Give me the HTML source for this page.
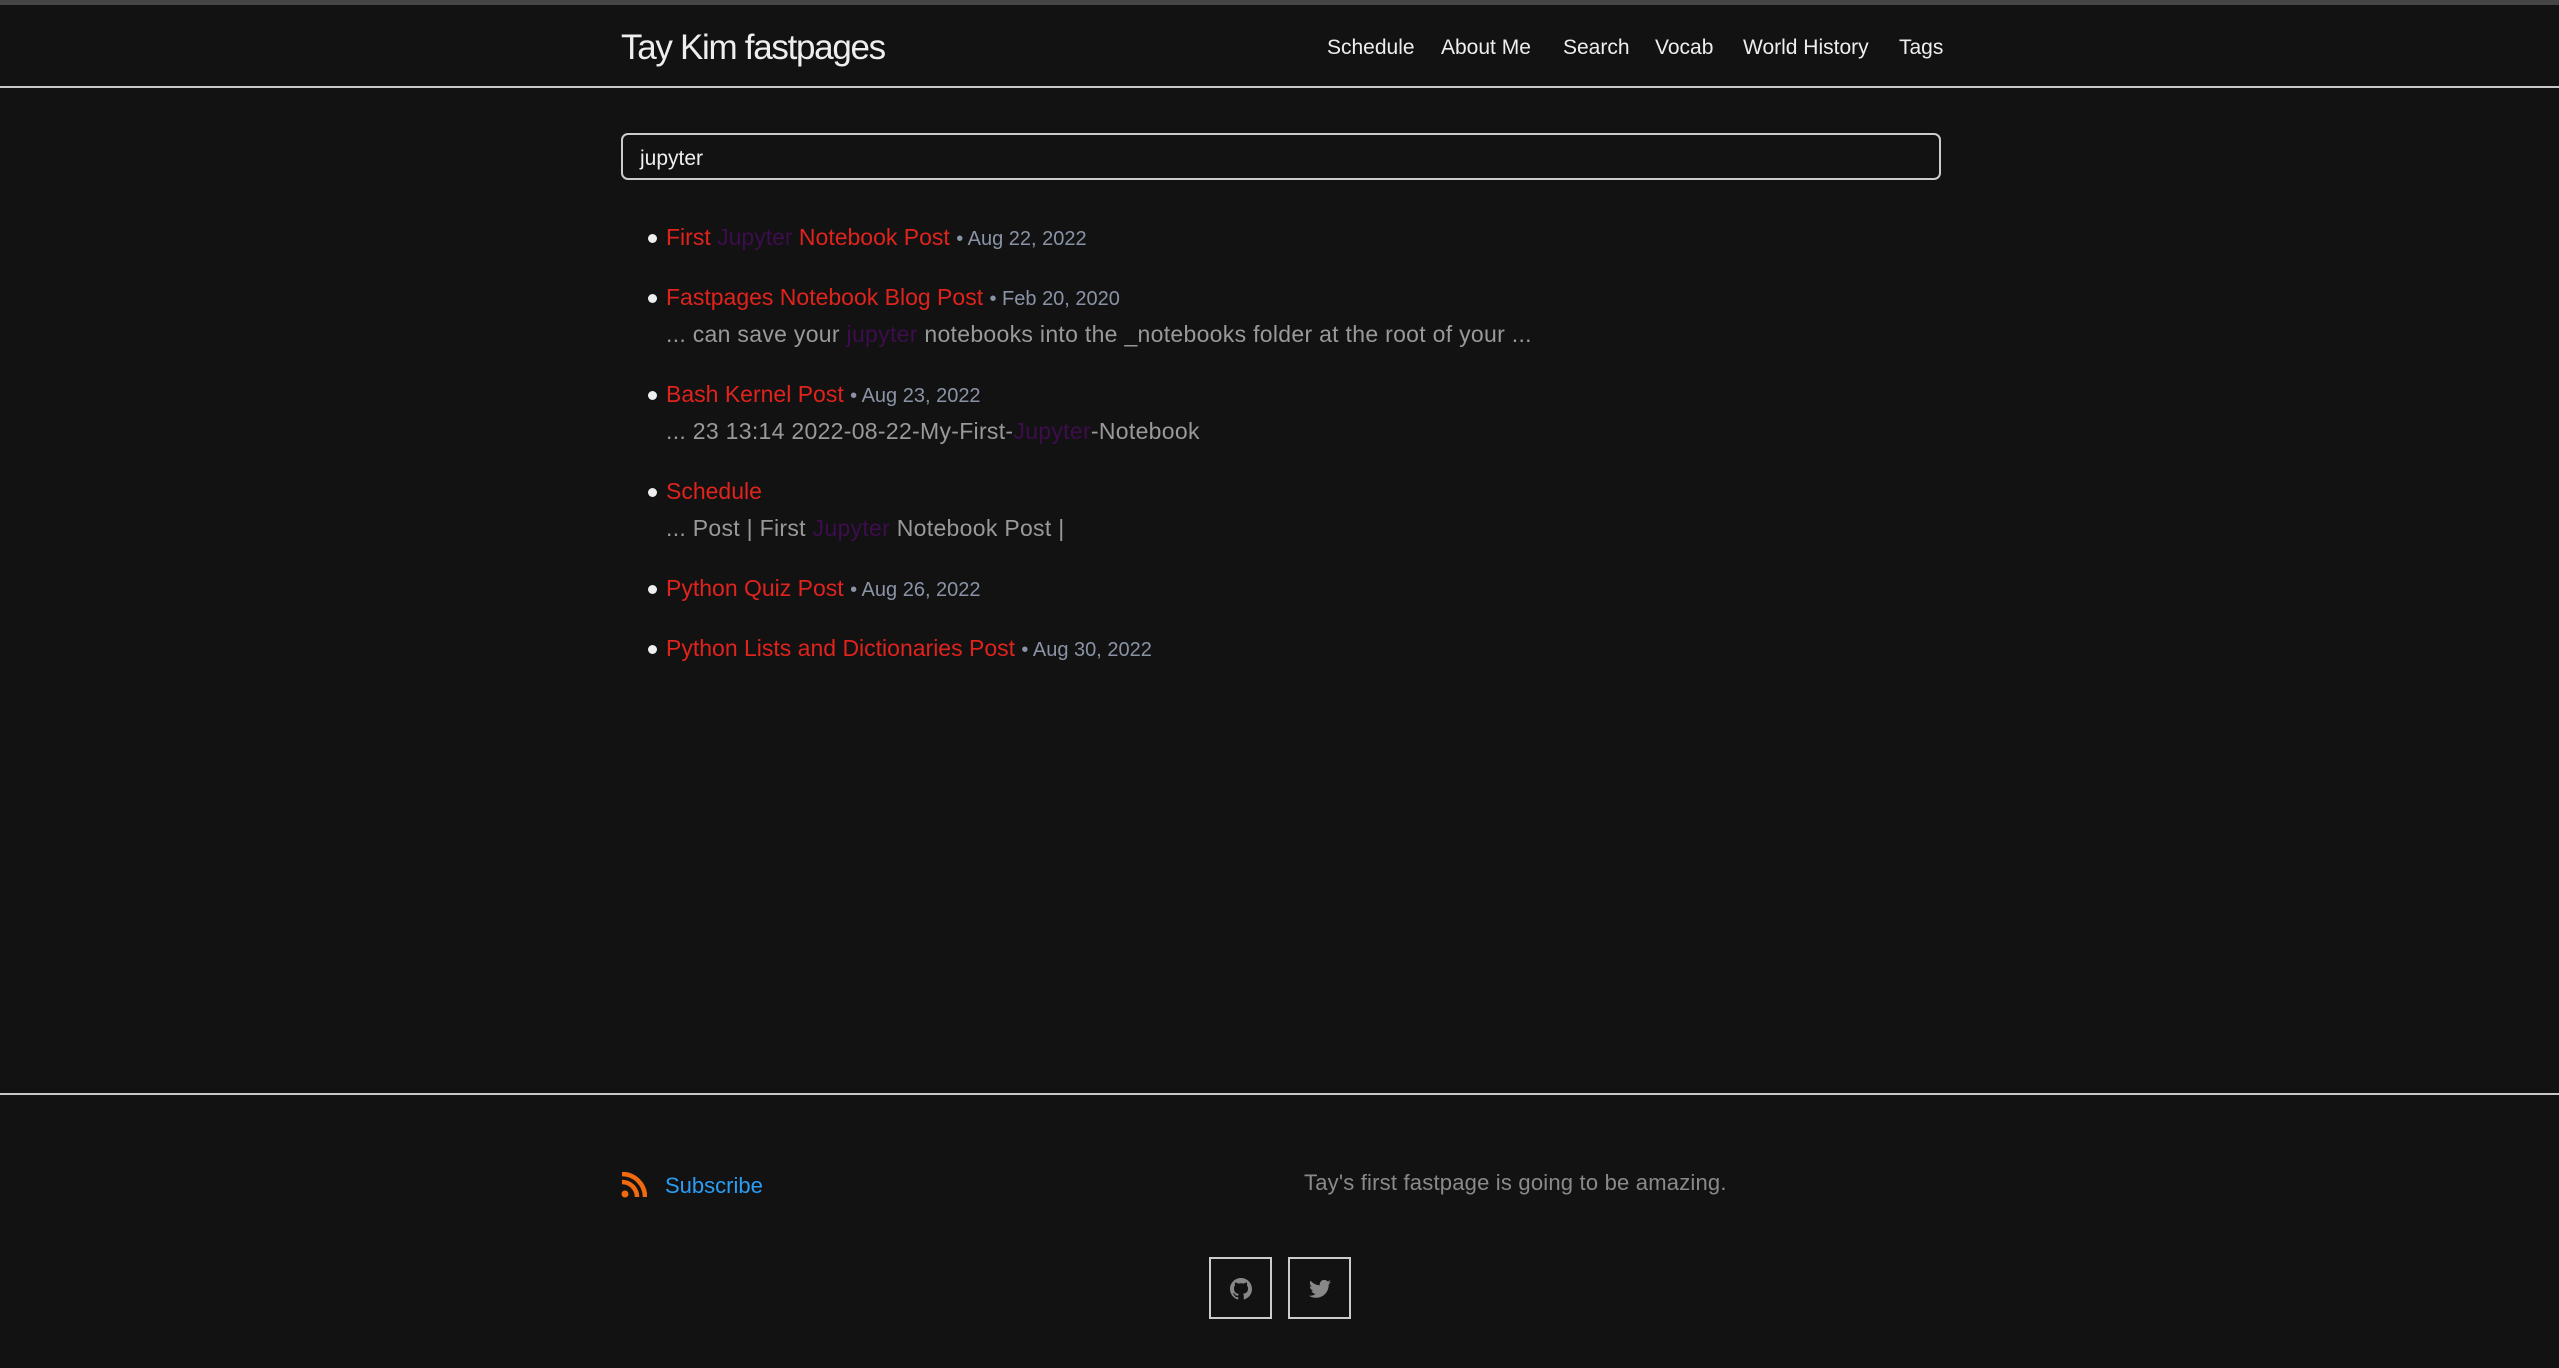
<!DOCTYPE html>
<html><head><meta charset="utf-8"><style>
*{margin:0;padding:0;box-sizing:border-box}
body{width:2559px;height:1368px;background:#121212;font-family:"Liberation Sans",sans-serif;position:relative;overflow:hidden;color:#ddd}
.topbar{position:absolute;left:0;top:0;width:2559px;height:5px;background:#454545}
.hline{position:absolute;left:0;width:2559px;height:2px;background:#c8c8c8}
.title{position:absolute;left:621px;top:28px;font-size:35px;color:#eee;font-weight:300;letter-spacing:-1.3px}
.nav{position:absolute;top:36px;font-size:21px;color:#eee}
.search{position:absolute;left:621px;top:133px;width:1320px;height:47px;border:2px solid #ccc;border-radius:7px;font-size:21px;color:#eee;padding:12px 17px}
.item{position:absolute;left:666px;font-size:23px;color:#e0231c;white-space:nowrap}
.item:before{content:"";position:absolute;left:-18px;top:10px;width:9px;height:9px;border-radius:50%;background:#eee}
.d{color:#8a93a5;font-size:20px}
.h{color:#3d0d4d}
.snip{position:absolute;left:666px;font-size:23px;color:#999;white-space:nowrap;letter-spacing:.3px}
.box{position:absolute;top:1257px;width:63px;height:62px;border:2px solid #ccc}
</style></head><body>
<div class="topbar"></div>
<div class="title">Tay Kim fastpages</div>
<div class="nav" style="left:1327px">Schedule</div>
<div class="nav" style="left:1441px">About Me</div>
<div class="nav" style="left:1563px">Search</div>
<div class="nav" style="left:1655px">Vocab</div>
<div class="nav" style="left:1743px">World History</div>
<div class="nav" style="left:1899px">Tags</div>
<div class="hline" style="top:86px"></div>
<div class="search">jupyter</div>

<div class="item" style="top:224px">First <span class="h">Jupyter</span> Notebook Post <span class="d">• Aug 22, 2022</span></div>
<div class="item" style="top:284px">Fastpages Notebook Blog Post <span class="d">• Feb 20, 2020</span></div>
<div class="snip" style="top:321px">... can save your <span class="h">jupyter</span> notebooks into the _notebooks folder at the root of your ...</div>
<div class="item" style="top:381px">Bash Kernel Post <span class="d">• Aug 23, 2022</span></div>
<div class="snip" style="top:418px">... 23 13:14 2022-08-22-My-First-<span class="h">Jupyter</span>-Notebook</div>
<div class="item" style="top:478px">Schedule</div>
<div class="snip" style="top:515px">... Post | First <span class="h">Jupyter</span> Notebook Post |</div>
<div class="item" style="top:575px">Python Quiz Post <span class="d">• Aug 26, 2022</span></div>
<div class="item" style="top:635px">Python Lists and Dictionaries Post <span class="d">• Aug 30, 2022</span></div>

<div class="hline" style="top:1093px"></div>
<svg style="position:absolute;left:621px;top:1172px" width="26" height="26" viewBox="0 0 26 26"><circle cx="4" cy="22" r="3.5" fill="#f26a0f"/><path d="M1 10a15 15 0 0 1 15 15" stroke="#f26a0f" stroke-width="4.5" fill="none"/><path d="M1 2a23 23 0 0 1 23 23" stroke="#f26a0f" stroke-width="4.5" fill="none"/></svg>
<div style="position:absolute;left:665px;top:1173px;font-size:22px;color:#2a9df4">Subscribe</div>
<div style="position:absolute;left:1304px;top:1170px;font-size:22px;color:#8a8a8a;letter-spacing:.2px">Tay's first fastpage is going to be amazing.</div>
<div class="box" style="left:1209px"><svg style="position:absolute;left:19px;top:19px" width="22" height="22" viewBox="0 0 16 16"><path fill="#888" d="M8 0C3.6 0 0 3.6 0 8c0 3.5 2.3 6.5 5.5 7.6.4.1.5-.2.5-.4v-1.4c-2.2.5-2.7-1-2.7-1-.4-.9-.9-1.2-.9-1.2-.7-.5.1-.5.1-.5.8.1 1.2.8 1.2.8.7 1.3 1.9.9 2.3.7.1-.5.3-.9.5-1.1-1.8-.2-3.6-.9-3.6-4 0-.9.3-1.6.8-2.1-.1-.2-.4-1 .1-2.1 0 0 .7-.2 2.2.8.6-.2 1.300-.3 2-.3s1.4.1 2 .3c1.5-1 2.2-.8 2.2-.8.4 1.1.2 1.9.1 2.1.5.6.8 1.3.8 2.1 0 3.1-1.9 3.700-3.6 3.9.3.3.5.8.5 1.5v2.2c0 .2.1.5.6.4C13.7 14.5 16 11.5 16 8c0-4.4-3.6-8-8-8z"/></svg></div>
<div class="box" style="left:1288px"><svg style="position:absolute;left:19px;top:20px" width="22" height="20" viewBox="0 0 24 20"><path fill="#888" d="M24 2.4c-.9.4-1.8.7-2.8.8 1-.6 1.8-1.6 2.2-2.7-1 .6-2 1-3.1 1.2C19.3.7 18 0 16.6 0c-2.7 0-4.9 2.2-4.9 4.9 0 .4 0 .8.1 1.1C7.7 5.8 4.1 3.9 1.700.9c-.4.7-.7 1.600-.7 2.5 0 1.7.9 3.2 2.2 4.1-.8 0-1.6-.2-2.2-.6v.1c0 2.4 1.7 4.4 3.9 4.8-.4.1-.8.2-1.3.2-.3 0-.6 0-.9-.1.6 2 2.4 3.4 4.6 3.4-1.7 1.3-3.8 2.1-6.1 2.1H0c2.2 1.4 4.8 2.2 7.5 2.2 9.1 0 14-7.5 14-14v-.6c1-.7 1.8-1.6 2.5-2.6z"/></svg></div>
</body></html>
